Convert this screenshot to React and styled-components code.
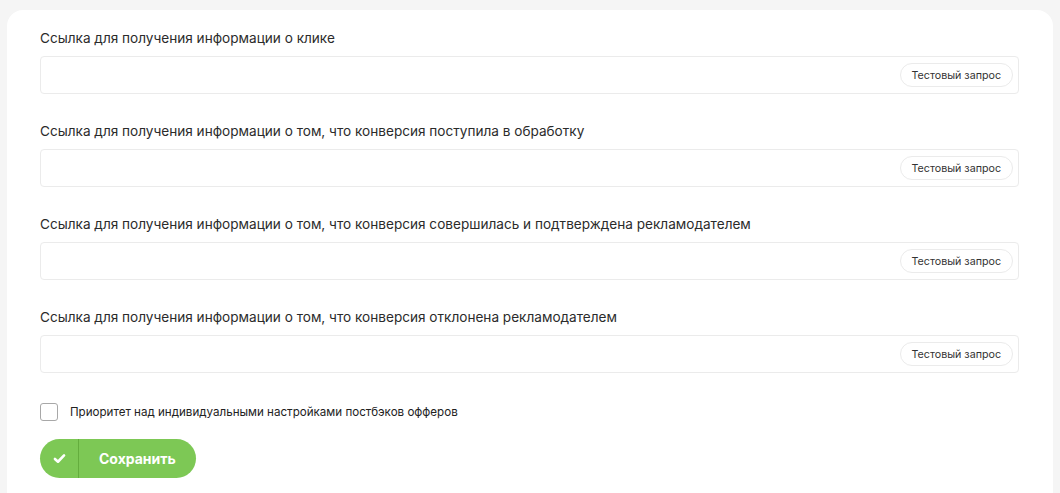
import React, { useState } from 'react';
import styled, { createGlobalStyle } from 'styled-components';

const GlobalStyle = createGlobalStyle`
  html, body {
    margin: 0;
    padding: 0;
    background-color: #f5f5f5;
    font-family: 'Inter', 'Inter Variable', 'Roboto', sans-serif;
    color: #2a2a2a;
  }
  * {
    box-sizing: border-box;
  }
`;

const Card = styled.div`
  margin: 10px 7px 0 7px;
  background-color: #ffffff;
  border-radius: 16px 16px 0 0;
  padding: 18px 34px 20px 33px;
  min-height: 483px;
`;

const Field = styled.div`
  margin-bottom: ${({ last }) => (last ? 0 : 27)}px;
`;

const Label = styled.label`
  display: block;
  font-size: 13.6px;
  line-height: 20px;
  color: #2b2b2b;
  margin-bottom: 8px;
`;

const InputWrapper = styled.div`
  display: flex;
  align-items: center;
  height: 38px;
  border: 1px solid #ebebeb;
  border-radius: 4px;
  padding: 0 5px 0 12px;
`;

const Input = styled.input`
  flex: 1;
  border: none;
  background: transparent;
  font-family: inherit;
  font-size: 14px;
  height: 100%;

  &:focus {
    outline: none;
  }
`;

const TestButton = styled.button`
  height: 24px;
  padding: 0 11px;
  border: 1px solid #ebebeb;
  border-radius: 12px;
  background-color: #ffffff;
  font-family: inherit;
  font-size: 10.7px;
  color: #333;
  cursor: pointer;
`;

const CheckRow = styled.label`
  display: flex;
  align-items: center;
  gap: 12px;
  margin-top: 30px;
  font-size: 11.6px;
  color: #222;
  cursor: pointer;
`;

const Box = styled.span`
  width: 18px;
  height: 18px;
  border: 1px solid ${({ checked }) => (checked ? '#7dc855' : '#a8a8a8')};
  background-color: ${({ checked }) => (checked ? '#7dc855' : '#fff')};
  border-radius: 3px;
  display: inline-flex;
  align-items: center;
  justify-content: center;
`;

const SaveButton = styled.button`
  margin-top: 18px;
  display: flex;
  align-items: stretch;
  height: 39px;
  width: 156px;
  border: none;
  border-radius: 20px;
  background-color: #7dc855;
  color: #fff;
  font-family: inherit;
  font-weight: 700;
  font-size: 14px;
  padding: 0;
  cursor: pointer;
`;

const IconPart = styled.span`
  width: 39px;
  display: flex;
  align-items: center;
  justify-content: center;
  border-right: 1px solid #64ad3d;
`;

const TextPart = styled.span`
  flex: 1;
  display: flex;
  align-items: center;
  padding-left: 20px;
`;

const Check = ({ size = 13 }) => (
  <svg width={size} height={size} viewBox="0 0 12 12" fill="none">
    <path d="M1.8 6.4 L4.6 9 L10.2 3.2" stroke="#fff" strokeWidth="2.4" strokeLinecap="round" strokeLinejoin="round" />
  </svg>
);

const fields = [
  'Ссылка для получения информации о клике',
  'Ссылка для получения информации о том, что конверсия поступила в обработку',
  'Ссылка для получения информации о том, что конверсия совершилась и подтверждена рекламодателем',
  'Ссылка для получения информации о том, что конверсия отклонена рекламодателем',
];

const App = () => {
  const [priority, setPriority] = useState(false);

  return (
    <>
      <GlobalStyle />
      <Card>
        {fields.map((label, i) => (
          <Field key={i} last={i === fields.length - 1}>
            <Label>{label}</Label>
            <InputWrapper>
              <Input />
              <TestButton type="button">Тестовый запрос</TestButton>
            </InputWrapper>
          </Field>
        ))}
        <CheckRow onClick={() => setPriority(!priority)}>
          <Box checked={priority}>{priority && <Check size={10} />}</Box>
          Приоритет над индивидуальными настройками постбэков офферов
        </CheckRow>
        <SaveButton type="button">
          <IconPart><Check /></IconPart>
          <TextPart>Сохранить</TextPart>
        </SaveButton>
      </Card>
    </>
  );
};

export default App;
